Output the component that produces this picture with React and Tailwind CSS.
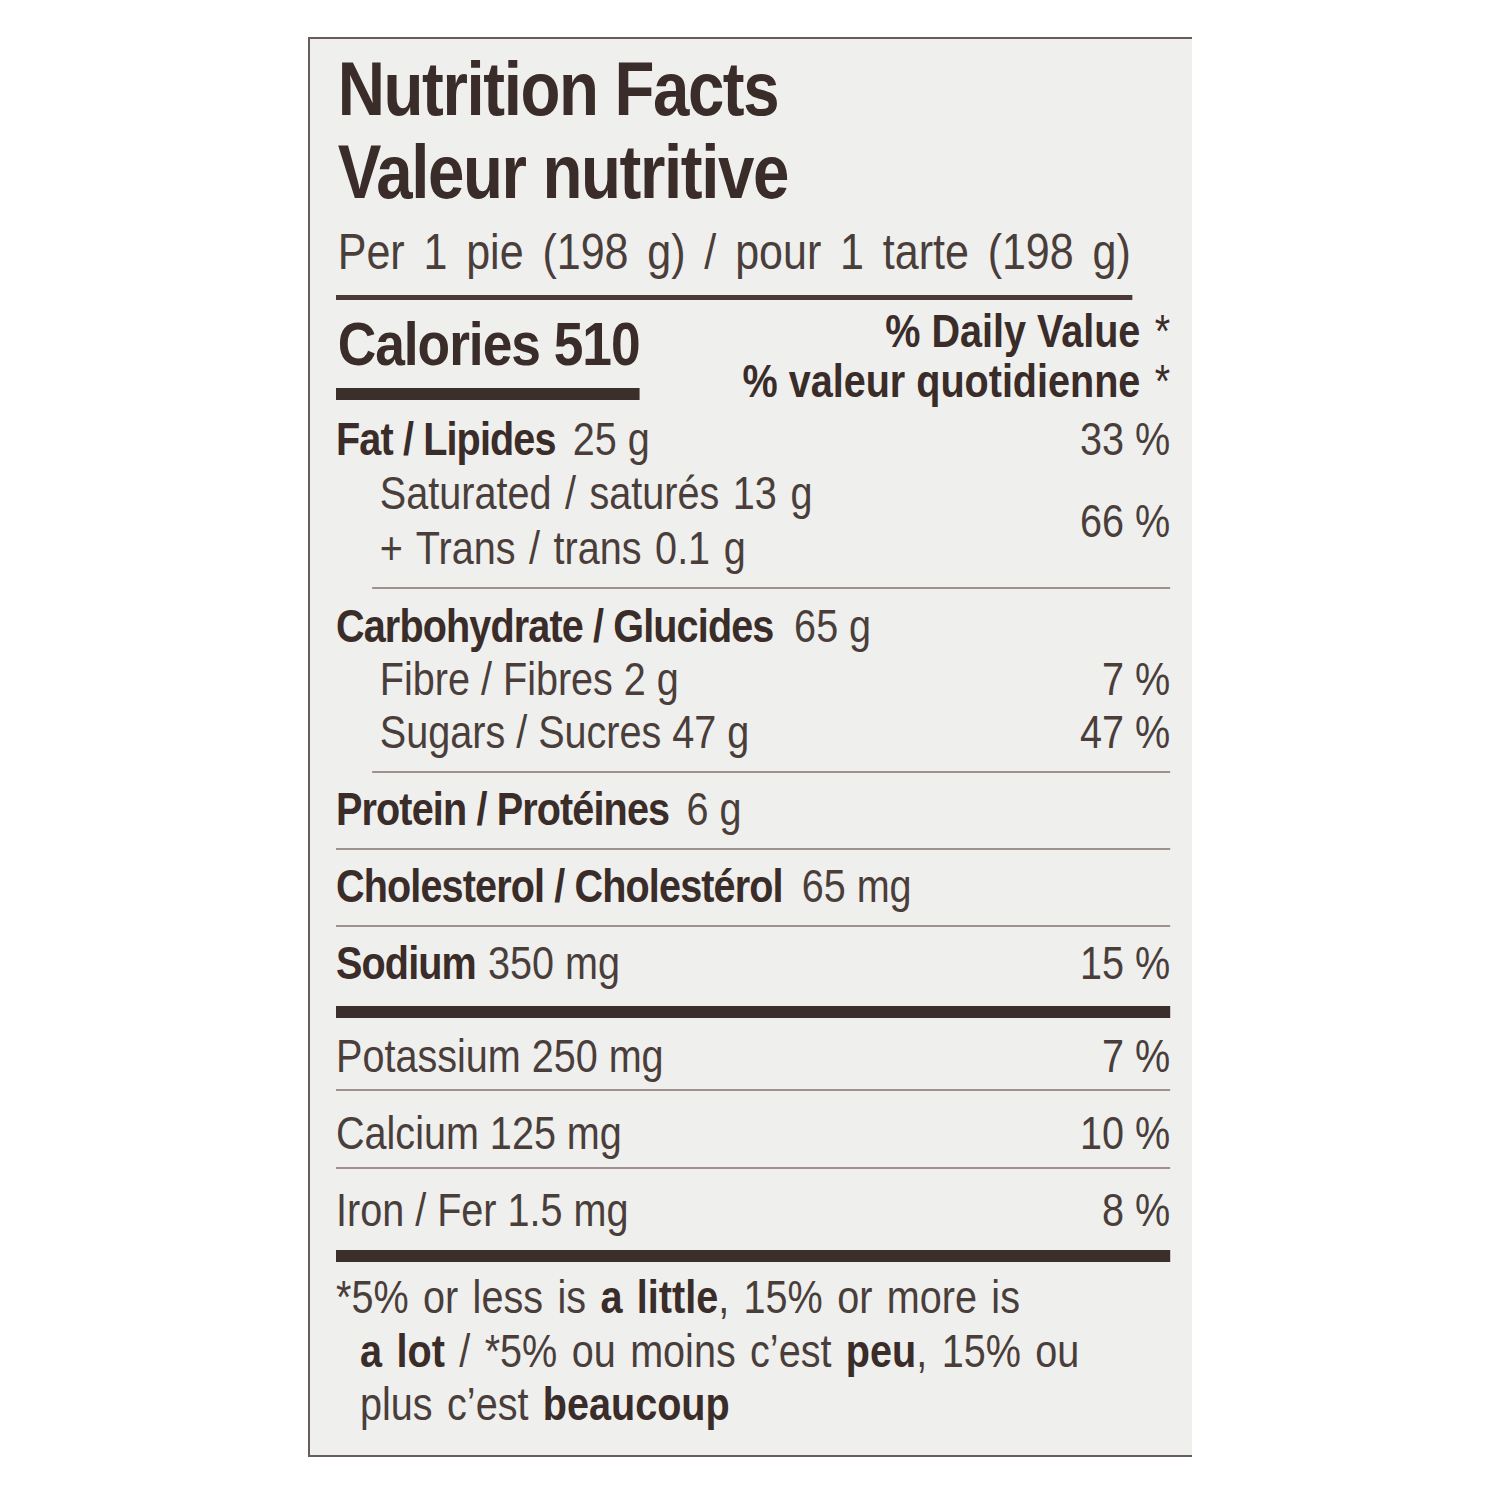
import React from "react";

const font = { fontFamily: '"Liberation Sans", Arial, sans-serif' };

function Row({ label, amount, dv, sub, bold = true, gap = "ml-[14px]" }) {
  return (
    <div className={`flex h-[53px] items-center justify-between ${sub ? "pl-[51px]" : ""}`}>
      <div>
        <span className={bold && !sub ? "font-bold text-[#3a2c28] tracking-[-1px]" : ""}>{label}</span>
        {amount && <span className={gap}>{amount}</span>}
      </div>
      {dv && <span>{dv}</span>}
    </div>
  );
}

export default function App() {
  return (
    <div className="w-[1500px] h-[1500px] bg-white pt-[37px]" style={font}>
      <div className="ml-[308px] w-[884px] h-[1420px] bg-[#efefed] border-l-2 border-t-2 border-b-2 border-[#6a5c58] pl-[26px] text-[#4a3e3b] text-[46px]">
        {/* content drawn in a condensed face: Arial metrics squeezed */}
        <div className="w-[970px] origin-left scale-x-[0.86]">
          <div className="pt-[8px] pl-[2px] font-bold text-[#3a2c28] text-[76px] leading-[83px] tracking-[-1.6px]">
            <div>Nutrition Facts</div>
            <div>Valeur nutritive</div>
          </div>
          <div className="pl-[2px] text-[50px] leading-[78px] [word-spacing:8px] whitespace-nowrap">
            Per 1 pie (198 g) / pour 1 tarte (198 g)
          </div>
          <div className="h-[5px] w-[926px] bg-[#4a3a36] mt-[4px]" />

          <div className="flex justify-between pt-[12px]">
            <div>
              <div className="pl-[2px] font-bold text-[#3a2c28] text-[62px] leading-[64px] tracking-[-1.2px] whitespace-nowrap">Calories 510</div>
              <div className="h-[12px] w-[353px] bg-[#3b2f2b] mt-[12px]" />
            </div>
            <div className="text-right font-bold text-[#3a2c28] text-[46px] leading-[50px] -mt-[6px] whitespace-nowrap">
              <div>% Daily Value <span className="font-normal ml-[4px]">*</span></div>
              <div>% valeur quotidienne <span className="font-normal ml-[4px]">*</span></div>
            </div>
          </div>

          <div className="pt-[6px]">
            <div className="flex h-[54px] items-center">
              <span className="font-bold text-[#3a2c28] tracking-[-1px]">Fat / Lipides</span>
              <span className="ml-[20px]">25 g</span>
              <span className="ml-auto">33 %</span>
            </div>
            <div className="flex items-center pl-[51px]">
              <div>
                <div className="h-[55px] flex items-center [word-spacing:3px]">Saturated / saturés 13 g</div>
                <div className="h-[55px] flex items-center [word-spacing:3px]">+ Trans / trans 0.1 g</div>
              </div>
              <span className="ml-auto">66 %</span>
            </div>
          </div>
          <div className="mt-[11px] ml-[42px] h-[2px] bg-[#a0918e]" />

          <div className="pt-[11px] pb-[12px]">
            <Row label="Carbohydrate / Glucides" amount="65 g" gap="ml-[24px]" />
            <Row label="Fibre / Fibres 2 g" dv="7 %" sub />
            <Row label="Sugars / Sucres 47 g" dv="47 %" sub />
          </div>
          <div className="ml-[42px] h-[2px] bg-[#a0918e]" />

          <div className="pt-[10px] pb-[12px]">
            <Row label="Protein / Protéines" amount="6 g" gap="ml-[20px]" />
          </div>
          <div className="h-[2px] bg-[#a0918e]" />

          <div className="pt-[10px] pb-[12px]">
            <Row label="Cholesterol / Cholestérol" amount="65 mg" gap="ml-[22px]" />
          </div>
          <div className="h-[2px] bg-[#a0918e]" />

          <div className="pt-[10px] pb-[16px]">
            <Row label="Sodium" amount="350 mg" dv="15 %" />
          </div>
          <div className="h-[12px] bg-[#3b2f2b]" />

          <div className="pt-[12px] pb-[6px]">
            <Row label="Potassium 250 mg" dv="7 %" bold={false} />
          </div>
          <div className="h-[2px] bg-[#a0918e]" />

          <div className="pt-[16px] pb-[7px]">
            <Row label="Calcium 125 mg" dv="10 %" bold={false} />
          </div>
          <div className="h-[2px] bg-[#a0918e]" />

          <div className="pt-[15px] pb-[13px]">
            <Row label="Iron / Fer 1.5 mg" dv="8 %" bold={false} />
          </div>
          <div className="h-[12px] bg-[#3b2f2b]" />

          <div className="pt-[9px] pl-[28px] indent-[-28px] text-[46px] leading-[53.5px] whitespace-nowrap [word-spacing:4px]">
            *5% or less is <b className="text-[#3a2c28]">a little</b>, 15% or more is
            <br />
            <b className="text-[#3a2c28]">a lot</b> / *5% ou moins c’est <b className="text-[#3a2c28]">peu</b>, 15% ou
            <br />
            plus c’est <b className="text-[#3a2c28]">beaucoup</b>
          </div>
        </div>
      </div>
    </div>
  );
}
